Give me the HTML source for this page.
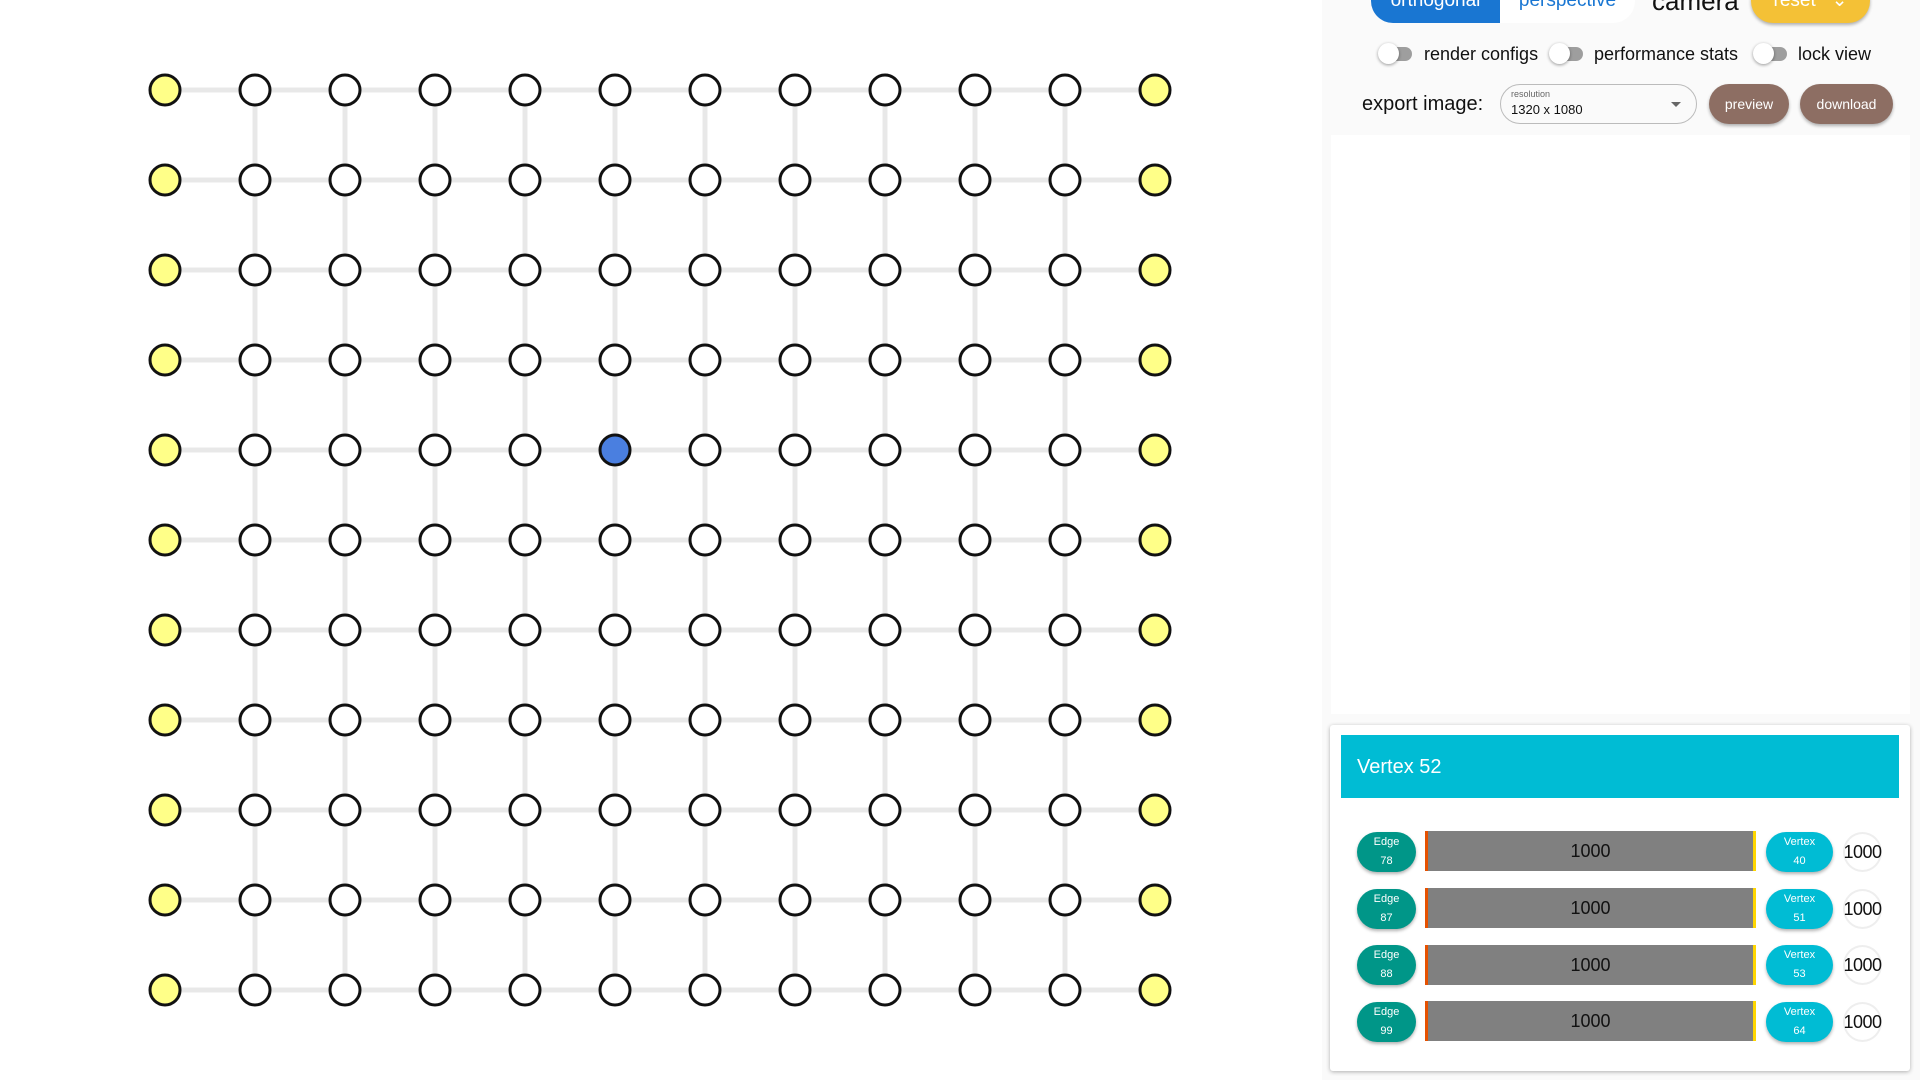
<!DOCTYPE html>
<html><head><meta charset="utf-8"><style>
*{box-sizing:border-box;margin:0;padding:0}
body{width:1920px;height:1080px;overflow:hidden;background:#fff;font-family:"Liberation Sans",sans-serif;position:relative}
.abs{position:absolute}
.panel{left:1322px;top:0;width:598px;height:1080px;background:#fafafa}
.tog{position:absolute;width:30px;height:14px;border-radius:7px;background:#9e9e9e}
.tog::before{content:"";position:absolute;left:-4px;top:-4px;width:21px;height:21px;border-radius:50%;background:#fff;box-shadow:0 1px 3px rgba(0,0,0,.4)}
.lbl{position:absolute;font-size:18px;color:#111}
.btn{position:absolute;background:#8d6e63;color:#fff;font-size:14px;border-radius:20px;display:flex;align-items:center;justify-content:center;box-shadow:0 2px 3px rgba(0,0,0,.3)}
.pill{position:absolute;height:40px;border-radius:20px;color:#fff;font-size:11px;text-align:center;line-height:19px;padding-top:1px;box-shadow:0 2px 3px rgba(0,0,0,.3)}
.e{left:1357px;width:59px;background:#009688}
.v{left:1766px;width:67px;background:#00bcd4}
.bar{position:absolute;left:1425px;width:331px;height:40px;background:#808080;border-left:3px solid #e65100;border-right:3px solid #ffd600;font-size:18px;display:flex;align-items:center;justify-content:center;color:#111}
.num{position:absolute;left:1843px;width:39px;height:40px;border-radius:50%;border:2px solid #eee;font-size:18px;display:flex;align-items:center;justify-content:center;color:#111;letter-spacing:-0.5px}
.tb{position:absolute;top:-22px;height:45px;display:flex;align-items:center;justify-content:center;font-size:19px}
</style></head><body>
<svg class="abs" style="left:0;top:0" width="1320" height="1080">
<g stroke="#e8e8e8" stroke-width="5">
<line x1="165" y1="90" x2="1155" y2="90"/><line x1="165" y1="180" x2="1155" y2="180"/><line x1="165" y1="270" x2="1155" y2="270"/><line x1="165" y1="360" x2="1155" y2="360"/><line x1="165" y1="450" x2="1155" y2="450"/><line x1="165" y1="540" x2="1155" y2="540"/><line x1="165" y1="630" x2="1155" y2="630"/><line x1="165" y1="720" x2="1155" y2="720"/><line x1="165" y1="810" x2="1155" y2="810"/><line x1="165" y1="900" x2="1155" y2="900"/><line x1="165" y1="990" x2="1155" y2="990"/>
<line x1="255" y1="90" x2="255" y2="990"/><line x1="345" y1="90" x2="345" y2="990"/><line x1="435" y1="90" x2="435" y2="990"/><line x1="525" y1="90" x2="525" y2="990"/><line x1="615" y1="90" x2="615" y2="990"/><line x1="705" y1="90" x2="705" y2="990"/><line x1="795" y1="90" x2="795" y2="990"/><line x1="885" y1="90" x2="885" y2="990"/><line x1="975" y1="90" x2="975" y2="990"/><line x1="1065" y1="90" x2="1065" y2="990"/>
</g>
<g id="nodes" stroke="#111" stroke-width="3"></g>
</svg>
<script>
var g=document.getElementById('nodes'),s='';
for(var r=0;r<11;r++)for(var c=0;c<12;c++){var f=(c==0||c==11)?'#ffff88':'#fff';if(r==4&&c==5)f='#4a7fe0';s+='<circle cx="'+(165+c*90)+'" cy="'+(90+r*90)+'" r="15" fill="'+f+'"/>';}
g.innerHTML=s;
</script>
<div class="abs panel"></div>
<div class="tb" style="left:1371px;width:129px;background:#1976d2;border-radius:22px 0 0 22px;color:#fff">orthogonal</div>
<div class="tb" style="left:1500px;width:135px;background:#fff;border-radius:0 22px 22px 0;color:#1976d2">perspective</div>
<div class="abs" style="left:1652px;top:-14px;font-size:26px;color:#111">camera</div>
<div class="tb" style="left:1751px;width:119px;background:#f4c136;border-radius:22px;color:#fff;box-shadow:0 2px 3px rgba(0,0,0,.3)">reset &nbsp;&nbsp;⌄</div>
<div class="tog" style="left:1382px;top:47px"></div><div class="lbl" style="left:1424px;top:44px">render configs</div>
<div class="tog" style="left:1553px;top:47px"></div><div class="lbl" style="left:1594px;top:44px">performance stats</div>
<div class="tog" style="left:1757px;top:47px"></div><div class="lbl" style="left:1798px;top:44px">lock view</div>
<div class="abs" style="left:1362px;top:93px;font-size:20px;color:#111">export image:</div>
<div class="abs" style="left:1500px;top:84px;width:197px;height:40px;border:1px solid #bbb;border-radius:20px;background:#fafafa"><div style="position:absolute;left:10px;top:4px;font-size:9px;color:#666">resolution</div><div style="position:absolute;left:10px;top:17px;font-size:13px;color:#111">1320 x 1080</div><div style="position:absolute;left:170px;top:17px;width:0;height:0;border:5px solid transparent;border-top:5px solid #666"></div></div>
<div class="btn" style="left:1709px;top:84px;width:80px;height:40px">preview</div>
<div class="btn" style="left:1800px;top:84px;width:93px;height:40px">download</div>
<div class="abs" style="left:1331px;top:135px;width:579px;height:579px;background:#fff"></div>
<div class="abs" style="left:1330px;top:725px;width:580px;height:346px;background:#fff;border-radius:3px;box-shadow:0 1px 4px rgba(0,0,0,.3)"></div>
<div class="abs" style="left:1341px;top:735px;width:558px;height:63px;background:#00bcd4;color:#fff;font-size:20px;padding:21px 0 0 16px">Vertex 52</div>
<div class="pill e" style="top:832px">Edge<br>78</div><div class="bar" style="top:831px">1000</div><div class="pill v" style="top:832px">Vertex<br>40</div><div class="num" style="top:832px">1000</div>
<div class="pill e" style="top:889px">Edge<br>87</div><div class="bar" style="top:888px">1000</div><div class="pill v" style="top:889px">Vertex<br>51</div><div class="num" style="top:889px">1000</div>
<div class="pill e" style="top:945px">Edge<br>88</div><div class="bar" style="top:945px">1000</div><div class="pill v" style="top:945px">Vertex<br>53</div><div class="num" style="top:945px">1000</div>
<div class="pill e" style="top:1002px">Edge<br>99</div><div class="bar" style="top:1001px">1000</div><div class="pill v" style="top:1002px">Vertex<br>64</div><div class="num" style="top:1002px">1000</div>
</body></html>
